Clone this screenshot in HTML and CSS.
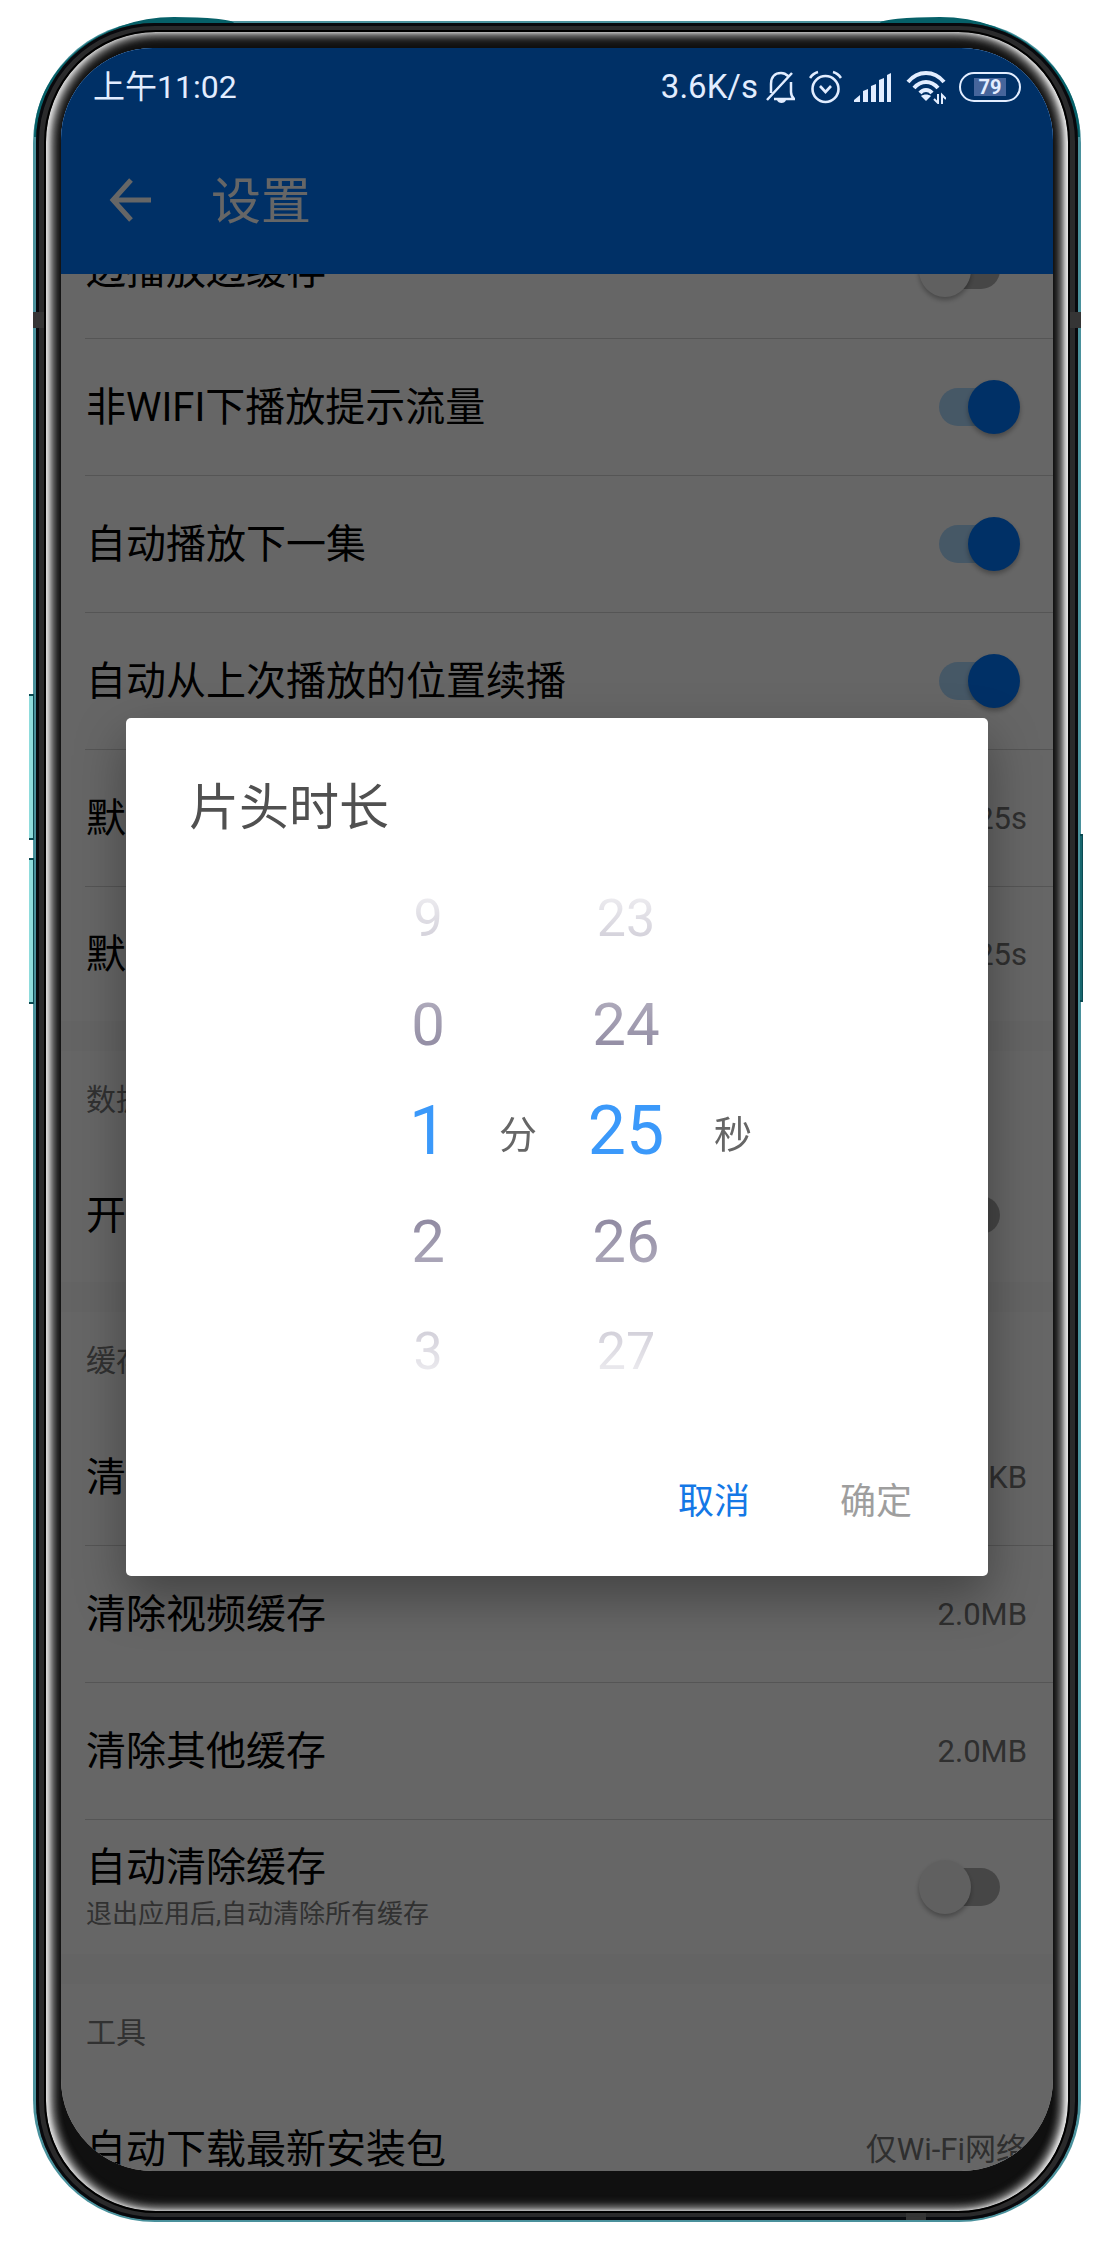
FILE: index.html
```html
<!DOCTYPE html>
<html lang="zh-CN">
<head>
<meta charset="utf-8">
<meta name="viewport" content="width=device-width, initial-scale=1">
<title>设置</title>
<link rel="stylesheet" href="styles.css">
</head>
<body>
<div class="phone">
  <span class="key key-up"></span>
  <span class="key key-down"></span>
  <span class="key key-power"></span>
  <div class="rim">
    <span class="antenna antenna-left"></span>
    <span class="antenna antenna-right"></span>
    <span class="antenna antenna-bottom"></span>
    <div class="bezel">
      <div class="screen">
        <div class="status">
          <span class="clock">上午11:02</span>
          <span class="speed">3.6K/s</span>
          <svg class="bell" width="29" height="33" viewBox="0 0 29 33" fill="none" stroke="currentColor" stroke-width="2.500">
            <path d="M1 29 26 2M5 22V13C5 6 9 2 15 2c3 0 5 1 7 3M25 11v10c0 3 1 5 3 7H8"/>
            <path d="M11 29h9c-1 4-8 4-9 0z" fill="currentColor" stroke="none"/>
          </svg>
          <svg class="alarm" width="33" height="34" viewBox="0 0 33 34" fill="none" stroke="currentColor" stroke-width="2.600">
            <circle cx="16.500" cy="19" r="13"/>
            <path d="m11 16 5.500 6 5.500-6M1 8c2-3 4-5 8-6M32 8c-2-3-4-5-8-6"/>
          </svg>
          <svg class="signal" width="38" height="30" viewBox="0 0 38 30" fill="currentColor">
            <path d="M0 30v-2l6-5v7zM9 19l5-2v13h-5zM17 14l5-2v18h-5zM25 8l5-2v24h-5zM33 3l4-2v29h-4z"/>
          </svg>
          <svg class="wifi" width="40" height="34" viewBox="0 0 40 34" fill="none" stroke="currentColor" stroke-width="4">
            <path d="M2 12C12 0 28 0 38 12M8 18c7-8 17-8 24 0M14 23c3-4 9-4 12 0"/>
            <path d="M15 26c3-2 7-2 10 0l-5 5z" fill="currentColor" stroke="none"/>
            <path d="M32 24v9l-4-4M36 34v-9l4 4" stroke-width="2"/>
          </svg>
          <span class="battery"><span class="charge">79</span></span>
        </div>
        <header class="appbar">
          <button class="back" type="button" aria-label="返回">
            <svg width="42" height="44" viewBox="0 0 42 44" fill="none" stroke="currentColor" stroke-width="5">
              <path d="M22 2 4 22l18 20M4 22h38"/>
            </svg>
          </button>
          <h1>设置</h1>
        </header>
        <main class="viewport">
          <div class="list">
            <div class="row line"><label for="s1">边播放边缓存</label><input class="switch" type="checkbox" id="s1"></div>
            <div class="row line"><label for="s2">非WIFI下播放提示流量</label><input class="switch" type="checkbox" id="s2" checked></div>
            <div class="row line"><label for="s3">自动播放下一集</label><input class="switch" type="checkbox" id="s3" checked></div>
            <div class="row line"><label for="s4">自动从上次播放的位置续播</label><input class="switch" type="checkbox" id="s4" checked></div>
            <div class="row line"><span>默认</span><span class="value">25s</span></div>
            <div class="row"><span>默认</span><span class="value">25s</span></div>
            <h2>数据</h2>
            <div class="row"><label for="s5">开启</label><input class="switch" type="checkbox" id="s5"></div>
            <h2>缓存</h2>
            <div class="row line"><span>清除</span><span class="value">KB</span></div>
            <div class="row line"><span>清除视频缓存</span><span class="value">2.0MB</span></div>
            <div class="row line"><span>清除其他缓存</span><span class="value">2.0MB</span></div>
            <div class="row"><label class="stack" for="s6">自动清除缓存<small>退出应用后,自动清除所有缓存</small></label><input class="switch" type="checkbox" id="s6"></div>
            <h2>工具</h2>
            <div class="row line"><span>自动下载最新安装包</span><span class="value">仅Wi-Fi网络</span></div>
          </div>
        </main>
        <div class="scrim">
          <section class="dialog" role="dialog" aria-labelledby="dialog-title">
            <h3 id="dialog-title">片头时长</h3>
            <div class="picker">
              <ul class="wheel">
                <li class="far">9</li><li>0</li><li class="current">1</li><li>2</li><li class="far">3</li>
              </ul>
              <span class="unit">分</span>
              <ul class="wheel">
                <li class="far">23</li><li>24</li><li class="current">25</li><li>26</li><li class="far">27</li>
              </ul>
              <span class="unit">秒</span>
            </div>
            <div class="actions">
              <button class="cancel" type="button">取消</button>
              <button class="confirm" type="button">确定</button>
            </div>
          </section>
        </div>
      </div>
    </div>
  </div>
</div>
</body>
</html>
```
FILE: styles.css
```css
* {
  box-sizing: border-box;
}

body {
  margin: 0;
  height: 100vh;
  padding: 21px 27px 23px 33px;
  display: flex;
  background: #fff;
  font-family: Roboto, "Noto Sans CJK SC", sans-serif;
}

h1, h2, h3, ul {
  margin: 0;
  padding: 0;
  font-weight: 400;
}

button {
  border: 0;
  padding: 0;
  background: none;
  font: inherit;
}

/* Phone body */
.phone {
  position: relative;
  z-index: 0;
  flex: 1;
  min-width: 0;
  display: flex;
  padding: 2px 3px;
  border-radius: 122px;
  background: #4a919c;
}

.phone::before,
.phone::after {
  content: "";
  position: absolute;
  z-index: -1;
  top: -4px;
  width: 200px;
  height: 120px;
  background: #066068;
}

.phone::before {
  left: 1px;
  border-radius: 140px 60px 0 0 / 120px 6px 0 0;
}

.phone::after {
  right: 1px;
  border-radius: 60px 140px 0 0 / 6px 120px 0 0;
}

.key {
  position: absolute;
  width: 5px;
  height: 146px;
  border: 1px solid #0b4a52;
  border-width: 2px 1px 2px 0;
  background: #8fdcdc;
}

.key-up {
  left: -4px;
  top: 673px;
}

.key-down {
  left: -4px;
  top: 837px;
}

.key-power {
  right: -2px;
  top: 813px;
  width: 3px;
  height: 168px;
  background: #17666e;
}

.rim {
  position: relative;
  flex: 1;
  min-width: 0;
  display: flex;
  padding: 7px 8px;
  border-radius: 119px;
  background: #2a2a2b;
  box-shadow: inset 0 0 0 3px #08090d;
}

.antenna {
  position: absolute;
  background: #353535;
}

.antenna-left,
.antenna-right {
  top: 289px;
  width: 11px;
  height: 16px;
}

.antenna-left {
  left: -3px;
}

.antenna-right {
  right: -3px;
}

.antenna-bottom {
  right: 152px;
  bottom: 0;
  width: 20px;
  height: 7px;
}

.bezel {
  flex: 1;
  min-width: 0;
  display: flex;
  padding: 16px 15px 40px;
  border: 2px solid #000;
  border-radius: 112px;
  background: #101010;
  box-shadow:
    inset 4px 0 4px -1px #e0e0e0,
    inset -4px 0 4px -1px #ececec,
    inset 7px 0 9px 0 #999,
    inset -7px 0 9px 0 #999,
    inset 0 0 10px 5px #6c6c6c;
}

.screen {
  position: relative;
  flex: 1;
  min-width: 0;
  display: flex;
  flex-direction: column;
  overflow: hidden;
  border-radius: 92px;
  background: #fff;
}

/* Status bar stays bright above the scrim */
.status {
  position: relative;
  z-index: 2;
  height: 78px;
  flex: none;
  display: flex;
  align-items: center;
  padding: 0 32px;
  color: #e2edff;
  font-size: 32px;
  line-height: 40px;
}

.clock {
  margin-right: auto;
}

.speed {
  font-size: 33px;
}

.bell {
  margin-left: 8px;
}

.alarm {
  margin-left: 14px;
}

.signal {
  margin-left: 12px;
}

.wifi {
  margin-left: 14px;
}

.battery {
  width: 62px;
  height: 30px;
  margin-left: 13px;
  padding: 4px 13px;
  display: flex;
  border: 2px solid #e2edff;
  border-radius: 15px;
}

.charge {
  flex: 1;
  background: #46659b;
  font-size: 20px;
  font-weight: 700;
  line-height: 18px;
  text-align: center;
}

.screen::before {
  content: "";
  position: absolute;
  top: 0;
  left: 0;
  right: 0;
  height: 78px;
  background: #0078ff;
}

.appbar {
  height: 148px;
  flex: none;
  display: flex;
  align-items: center;
  gap: 60px;
  padding: 0 48px;
  background: #0078ff;
  color: #fff;
}

.back {
  display: flex;
  color: inherit;
}

h1, h3 {
  padding-top: 4px;
  font-size: 50px;
  line-height: 60px;
}

/* Settings list, scrolled part of the way down */
.viewport {
  flex: 1;
  min-height: 0;
  overflow: hidden;
}

.list {
  margin-top: -72px;
}

.row {
  height: 134px;
  margin-left: 24px;
  padding: 2px 26px 0 1px;
  display: flex;
  align-items: center;
  justify-content: space-between;
  font-size: 40px;
  line-height: 52px;
  white-space: nowrap;
}

.line {
  height: 137px;
  border-bottom: 1px solid #d4d4d4;
}

.stack {
  display: flex;
  flex-direction: column;
}

small {
  font-size: 26px;
  line-height: 40px;
  color: #7a7a7a;
}

.value {
  font-size: 31px;
  color: #757575;
}

h2 {
  height: 127px;
  padding-left: 25px;
  border-top: 30px solid #fafafa;
  font-size: 30px;
  line-height: 98px;
  color: #7a7a7a;
}

.switch {
  appearance: none;
  position: relative;
  width: 61px;
  height: 38px;
  margin: 0 27px 2px 0;
  border-radius: 19px;
  background: #b0b0b0;
}

.switch::before {
  content: "";
  position: absolute;
  top: -8px;
  left: -20px;
  width: 52px;
  height: 54px;
  border-radius: 50%;
  background: #f1f1f1;
  box-shadow: 0 3px 5px rgba(0, 0, 0, .3);
}

.switch:checked {
  background: #afdbff;
}

.switch:checked::before {
  left: 29px;
  background: #0078ff;
}

/* Dialog */
.scrim {
  position: absolute;
  z-index: 1;
  inset: 0;
  display: flex;
  align-items: center;
  padding: 75px 65px 0;
  background: rgba(0, 0, 0, .6);
}

.dialog {
  flex: 1;
  padding: 56px 0 44px;
  border-radius: 5px;
  background: #fff;
  box-shadow: 0 20px 50px rgba(0, 0, 0, .35);
}

h3 {
  padding-left: 63px;
  color: #505050;
}

.picker {
  display: grid;
  grid-template-columns: 100fr 80fr 136fr 78fr;
  margin-top: 27px;
  padding: 0 216px 0 252px;
  mask-image: linear-gradient(transparent, #000 190px, #000 350px, transparent);
}

.wheel {
  display: grid;
  grid-template-rows: 106px 106px 108px 112px 108px;
  align-items: center;
  justify-items: center;
  list-style: none;
  font-size: 60px;
  color: #8e88a0;
}

.far {
  font-size: 52px;
}

.current {
  font-size: 68px;
  color: #3b99fa;
}

.unit {
  align-self: center;
  padding-bottom: 8px;
  text-align: center;
  font-size: 38px;
  color: #666;
}

.actions {
  display: flex;
  justify-content: flex-end;
  gap: 90px;
  margin-top: 67px;
  padding-right: 76px;
  font-size: 36px;
  line-height: 60px;
}

.cancel {
  color: #1478e6;
}

.confirm {
  color: #9e9e9e;
}
```
